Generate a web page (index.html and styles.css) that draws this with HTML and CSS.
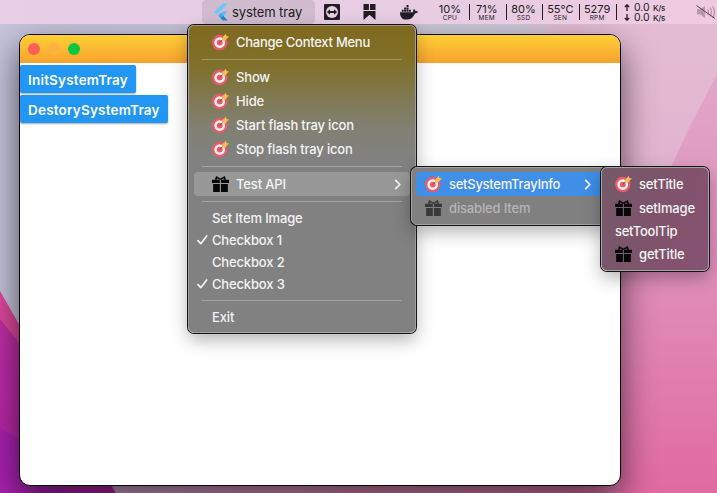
FILE: index.html
```html
<!DOCTYPE html>
<html lang="en">
<head>
<meta charset="utf-8">
<title>system tray</title>
<link rel="stylesheet" href="styles.css">
</head>
<body>
<svg width="0" height="0" class="defs">
  <symbol id="target" viewBox="0 0 18 18">
    <circle cx="8.200" cy="9.600" r="8.200" fill="#e95b6c"/>
    <circle cx="8.200" cy="9.600" r="5.700" fill="#fff0f0"/>
    <circle cx="8.200" cy="9.600" r="3.100" fill="#e95b6c"/>
    <path d="M8.200 9.600l5-5" stroke="#8b3e4d" stroke-width="1"/>
    <path d="M10.800 7.600V4.400L14.600.3l.6 2.300 2.800.6-4 4z" fill="#f9bd50"/>
  </symbol>
  <symbol id="gift" viewBox="0 0 18 18">
    <path d="M0 4.600h8.300v3.400H0zM9.500 4.600H18v3.400H9.500zM1.200 9H8.300v8.500H1.200zM9.500 9h7.300v8.500H9.500z"/>
    <path d="M3 4.600L4.300.6 8.900 3.200 13.500.6 15 4.600H12.700L12.300 3 10 4.600H7.800L5.500 3 5.100 4.600z"/>
  </symbol>
  <symbol id="chevron" viewBox="0 0 7 10"><path d="M1.400 1.200l3.800 3.800-3.800 3.800" fill="none" stroke="currentColor" stroke-width="1.600" stroke-linecap="round" stroke-linejoin="round"/></symbol>
  <symbol id="check" viewBox="0 0 11 10"><path d="M1 5.700l2.800 3L9.700 1" fill="none" stroke="currentColor" stroke-width="1.700" stroke-linecap="round" stroke-linejoin="round"/></symbol>
</svg>

<svg class="wallpaper" viewBox="0 0 717 493" preserveAspectRatio="none">
  <defs>
    <linearGradient id="sky" x1="0" x2="1" y1="0" y2="0"><stop offset="0" stop-color="#c6c4db"/><stop offset=".72" stop-color="#cdc9d9"/><stop offset=".78" stop-color="#dfbfd3"/><stop offset="1" stop-color="#e5c4d6"/></linearGradient>
    <linearGradient id="rose" x1="0" x2="0" y1="0" y2="1"><stop offset="0" stop-color="#e3bfd3"/><stop offset=".35" stop-color="#e2b2cf"/><stop offset=".62" stop-color="#de8fb9"/><stop offset="1" stop-color="#dc6fa5"/></linearGradient>
    <linearGradient id="rose2" x1="0" x2="0" y1="0" y2="1"><stop offset="0" stop-color="#e0a7c8"/><stop offset=".5" stop-color="#df8db9"/><stop offset="1" stop-color="#e06aa2"/></linearGradient>
    <linearGradient id="floor" x1="0" x2="1" y1="0" y2="0"><stop offset="0" stop-color="#d2a6cc"/><stop offset=".5" stop-color="#db87b4"/><stop offset="1" stop-color="#dc74a8"/></linearGradient>
    <linearGradient id="violet" x1="0" x2="0" y1="0" y2="1"><stop offset="0" stop-color="#c02fa6"/><stop offset="1" stop-color="#b323a8"/></linearGradient>
  </defs>
  <path fill="url(#sky)" d="M0 0h717v493H0z"/>
  <path fill="url(#rose)" d="M560 0h157v493H500z"/>
  <path fill="url(#floor)" d="M100 450h520v43H100z"/>
  <path fill="url(#rose2)" d="M717 74v419h-97V270L672 165 688 130z"/>
  <path fill="#df479d" d="M0 291l20 35 80 167H0z"/>
  <path fill="url(#violet)" d="M0 319l20 25 96 149H0z"/>
  <path fill="#a921b0" d="M0 428l20 12 50 53H0z"/>
</svg>

<header class="menubar">
  <div class="tray">
    <svg width="14" height="18" viewBox="0 0 14 18"><path d="M0 9.300L8.800.4h4.900L2.500 11.800z" fill="#66c9fb"/><path d="M8.800 8.500h4.900l-4.400 4.400-2.500-2.400z" fill="#57bdf2"/><path d="M4.400 12.800l2.500-2.500 6.800 7.300H8.800z" fill="#1c8bd7"/><path d="M4.400 12.800l2.500-2.500 2.400 2.500-2.500 2.500z" fill="#43acea"/></svg>
    <span>system tray</span>
  </div>
  <svg class="teamviewer" width="16" height="16" viewBox="0 0 16 16"><rect width="16" height="16" rx="1" fill="#211d22"/><circle cx="8" cy="8" r="6" fill="#e8d0e3"/><path d="M2.800 8l3.200-2.800v1.900h4V5.200L13.200 8 10 10.800V8.900H6v1.900z" fill="#211d22"/></svg>
  <svg class="bookmark" width="13" height="16" viewBox="0 0 13 16"><path d="M.5 0h5.400v6.100H.5zM7 0h5.500v6.100H7zM.5 7.100h12V16l-6-5.300-6 5.300z" fill="#211d22"/></svg>
  <svg class="docker" width="18" height="15" viewBox="0 0 18 15"><path d="M0 7.200h13.300c-.4-1.200-.2-2.300.7-3.200.9.6 1.300 1.300 1.400 2.200 1-.2 1.900 0 2.600.5-.6 1.300-1.600 1.700-3.100 1.700-1.800 4.400-4.800 6.200-8.800 6.200C2.400 14.600 0 12.300 0 7.200z" fill="#211d22"/><path d="M1.700 4.700h2v2h-2zM4.100 4.700h2v2h-2zM6.500 4.700h2v2h-2zM8.900 4.700h2v2h-2zM4.100 2.400h2v2h-2zM6.500 2.400h2v2h-2zM6.500.1h2v2h-2z" fill="#211d22"/></svg>
  <div class="stats">
    <div class="stat"><b>10%</b><small>CPU</small></div>
    <div class="stat"><b>71%</b><small>MEM</small></div>
    <div class="stat"><b>80%</b><small>SSD</small></div>
    <div class="stat"><b>55°C</b><small>SEN</small></div>
    <div class="stat"><b>5279</b><small>RPM</small></div>
  </div>
  <div class="net">
    <div><svg width="6" height="7" viewBox="0 0 6 7"><path d="M3 7V1M.8 3L3 .8 5.200 3" fill="none" stroke="#211d22" stroke-width="1.300"/></svg><b>0.0</b><small>K/s</small></div>
    <div><svg width="6" height="7" viewBox="0 0 6 7"><path d="M3 0v6M.8 4L3 6.200 5.200 4" fill="none" stroke="#211d22" stroke-width="1.300"/></svg><b>0.0</b><small>K/s</small></div>
  </div>
  <svg class="mute" width="20" height="16" viewBox="0 0 20 16"><path d="M1 5h3.200L9 2v12l-4.800-3.500H1z" fill="#b797af"/><path d="M11.500 5c1.300 2 1.300 4 0 6M14 3.500c2 3 2 6 0 9M16.600 2c2.500 4 2.500 8 0 12" fill="none" stroke="#b797af" stroke-width="1.300"/><path d="M.5 1.500L19 14.500" stroke="#51424e" stroke-width="1"/></svg>
</header>

<main class="window">
  <div class="titlebar"><i class="close"></i><i class="minimize"></i><i class="maximize"></i></div>
  <div class="content">
    <button class="init">InitSystemTray</button>
    <button class="destroy">DestorySystemTray</button>
  </div>
</main>

<nav class="menu main-menu">
  <div class="item"><svg class="icon"><use href="#target"/></svg><span class="tight">Change Context Menu</span></div>
  <hr>
  <div class="item"><svg class="icon"><use href="#target"/></svg><span>Show</span></div>
  <div class="item"><svg class="icon"><use href="#target"/></svg><span>Hide</span></div>
  <div class="item"><svg class="icon"><use href="#target"/></svg><span>Start flash tray icon</span></div>
  <div class="item"><svg class="icon"><use href="#target"/></svg><span>Stop flash tray icon</span></div>
  <hr>
  <div class="item open"><svg class="icon"><use href="#gift"/></svg><span>Test API</span><svg class="chevron"><use href="#chevron"/></svg></div>
  <hr>
  <div class="item plain"><span>Set Item Image</span></div>
  <div class="item plain"><svg class="check"><use href="#check"/></svg><span>Checkbox 1</span></div>
  <div class="item plain"><span>Checkbox 2</span></div>
  <div class="item plain"><svg class="check"><use href="#check"/></svg><span>Checkbox 3</span></div>
  <hr>
  <div class="item plain"><span>Exit</span></div>
</nav>

<nav class="menu api-menu">
  <div class="item selected"><svg class="icon"><use href="#target"/></svg><span class="tight">setSystemTrayInfo</span><svg class="chevron"><use href="#chevron"/></svg></div>
  <div class="item disabled"><svg class="icon"><use href="#gift"/></svg><span>disabled Item</span></div>
</nav>

<nav class="menu info-menu">
  <div class="item"><svg class="icon"><use href="#target"/></svg><span>setTitle</span></div>
  <div class="item"><svg class="icon"><use href="#gift"/></svg><span>setImage</span></div>
  <div class="item plain"><span class="tight">setToolTip</span></div>
  <div class="item"><svg class="icon"><use href="#gift"/></svg><span>getTitle</span></div>
</nav>
</body>
</html>
```
FILE: styles.css
```css
* { box-sizing: border-box; }
body {
  margin: 0;
  width: 717px;
  height: 493px;
  overflow: hidden;
  position: relative;
  font-family: Inter, "Liberation Sans", sans-serif;
  font-size: 13px;
  color: #211d22;
}
svg { display: block; flex: none; }
.defs { position: absolute; }
.wallpaper { position: absolute; inset: 0; width: 100%; height: 100%; z-index: -1; }

.menubar {
  height: 24px;
  padding-left: 202px;
  display: flex;
  align-items: center;
  background: linear-gradient(90deg, #e8cfe6, #e7cce2 60%, #efcae1);
  position: relative;
  z-index: 1;
}
.tray {
  width: 113px;
  height: 24px;
  padding-left: 12px;
  border-radius: 4px;
  background: #d0bbcf;
  display: flex;
  align-items: center;
  gap: 4px;
  white-space: nowrap;
  letter-spacing: -.1px;
}
.teamviewer { margin-left: 9px; }
.bookmark { margin-left: 23px; }
.docker { margin-left: 24px; }
.stats { display: flex; margin-left: 15px; width: 184px; }
.stat {
  width: 37px;
  height: 16px;
  padding-right: 2px;
  border-right: 1px solid #211d22;
  text-align: center;
  white-space: nowrap;
}
.stat b, .stat small { display: block; font-weight: 400; }
.stat b { font-size: 11px; line-height: 11px; }
.stat small { font-size: 6.5px; line-height: 7px; letter-spacing: .2px; }
.net { margin: 1px 0 0 7px; width: 44px; }
.net div { display: flex; align-items: center; height: 10px; }
.net b { font-size: 10.5px; line-height: 10px; font-weight: 400; width: 19px; margin-left: 4px; }
.net small { font-size: 8px; line-height: 10px; font-weight: 500; letter-spacing: -.2px; }
.mute { margin-left: 28px; }

.window {
  width: 602px;
  height: 452px;
  margin: 10px 0 0 19px;
  border: 1px solid #0b090b;
  border-radius: 11px;
  overflow: hidden;
  background: #fff;
  box-shadow: 0 14px 34px rgba(0, 0, 0, .62);
}
.titlebar {
  height: 28px;
  padding-left: 8px;
  display: flex;
  align-items: center;
  gap: 8px;
  background: linear-gradient(#ffcf36, #f6a22e);
}
.titlebar i { width: 12px; height: 12px; border-radius: 50%; }
.close { background: #ff5f57; }
.minimize { background: #fdb140; }
.maximize { background: #0ac740; }
.content { display: flex; flex-direction: column; align-items: flex-start; gap: 2px; padding-top: 2px; }
button {
  height: 28px;
  padding: 2px 0 0 8px;
  border: 0;
  border-radius: 2px;
  background: #2196f3;
  color: #fff;
  font: 600 13.5px Inter, sans-serif;
  letter-spacing: .2px;
  text-align: left;
  white-space: nowrap;
  box-shadow: 0 1px 2px rgba(0, 0, 0, .35);
}
.init { width: 116px; }
.destroy { width: 148px; }

.menu {
  position: absolute;
  z-index: 2;
  padding: 5px;
  border: 1px solid #a4a1a1;
  border-radius: 6px;
  color: #f4f3f3;
  font-weight: 500;
  letter-spacing: -.16px;
  box-shadow: 0 0 0 1px #171417, 0 7px 18px rgba(0, 0, 0, .3);
}
.tight { letter-spacing: -.27px; }
.main-menu {
  left: 188px;
  top: 25px;
  width: 228px;
  height: 308px;
  background: linear-gradient(#806920, #807029 12%, #80774c 22%, #808070 32%, #818181 43%);
  border-color: #9a9274 #a0a0a0 #a4a4a4;
}
.api-menu { left: 411px; top: 167px; width: 200px; height: 58px; background: #818080; padding: 4px; }
.info-menu { left: 601px; top: 167px; width: 108px; height: 104px; padding: 4px; background: linear-gradient(110deg, #745968, #81526c 60%, #865272); }
.item {
  height: 24px;
  padding-left: 18px;
  display: flex;
  align-items: center;
  gap: 7px;
  position: relative;
  border-radius: 4px;
  white-space: nowrap;
}
.main-menu .item:first-child { margin-top: -1px; }
.plain { height: 22px; }
.icon { width: 17px; height: 18px; color: #070707; fill: #070707; }
.chevron { width: 8px; height: 11px; margin-left: auto; margin-right: 8px; }
.check { position: absolute; left: 3px; width: 11px; height: 10px; }
.menu hr { margin: 5px 8px; height: 1px; border: 0; background: rgba(255, 255, 255, .27); }
.open { background: #989898; }
.api-menu .item, .info-menu .item { padding-left: 9px; }
.selected { background: #3f8ee8; }
.selected .chevron { margin-right: 14px; }
.disabled { color: #b6b6b6; }
.disabled .icon { color: #393939; fill: #393939; }
```
